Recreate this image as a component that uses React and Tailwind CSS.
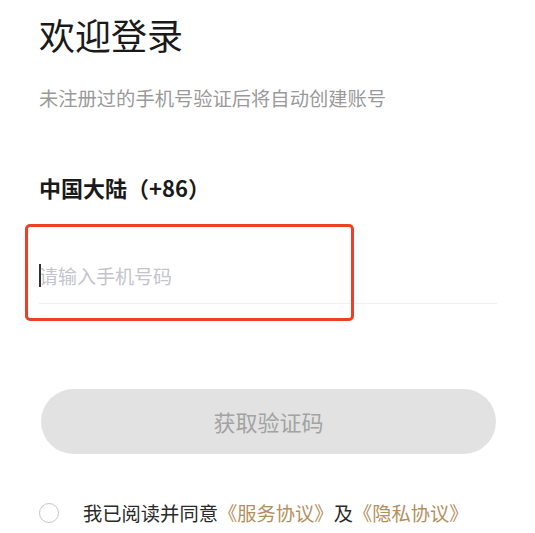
import React, { useState } from "react";

const font = "font-['Noto_Sans_CJK_SC','Noto_Sans',sans-serif]";

// Login page with phone number entry
const App = () => {
  const [agreed, setAgreed] = useState(false);
  const [phone, setPhone] = useState("");

  return (
    <div className={`min-h-screen bg-white ${font} pl-[39px] pr-[38px] relative`}>
      <h1 className="pt-[9px] text-[36px] leading-[50px] text-[#1a1a1a] font-normal">欢迎登录</h1>
      <p className="mt-[26px] text-[19.3px] leading-[26px] text-[#9a9a9a]">未注册过的手机号验证后将自动创建账号</p>

      <div className="mt-[62px] text-[22px] leading-[28px] font-bold text-[#1a1a1a]">中国大陆（+86）</div>

      {/* Phone input */}
      <div className="relative mt-[63px] border-b border-[#f0f0f0] pb-[14px]">
        <input
          type="tel"
          value={phone}
          onChange={(e) => setPhone(e.target.value)}
          placeholder="请输入手机号码"
          className="w-full text-[19px] leading-[24px] text-[#1a1a1a] placeholder:text-[#c4c4cc] outline-none bg-transparent caret-[#333]"
        />
        <span className="absolute left-0 top-[0px] w-[1.5px] h-[23px] bg-[#333]" />
      </div>

      {/* Annotation box over the input */}
      <div className="absolute left-[25px] top-[224px] w-[329px] h-[97px] border-[3px] border-[#ee4028] rounded-[5px] pointer-events-none" />

      <button
        type="button"
        disabled
        className="mt-[85px] ml-[2px] w-[455px] h-[65px] rounded-full bg-[#e2e2e2] text-[22px] text-[#a3a3a3] flex items-center justify-center"
      >
        获取验证码
      </button>

      <label className="mt-[46px] flex items-center text-[19.3px] leading-[26px] cursor-pointer">
        <button
          type="button"
          onClick={() => setAgreed(!agreed)}
          className={`w-[20px] h-[20px] rounded-full border-[1.5px] ${agreed ? "border-[#b08f5f] bg-[#b08f5f]" : "border-[#c8c8c8]"} shrink-0`}
        />
        <span className="ml-[24px] text-[#2a2a2a]">
          我已阅读并同意<span className="text-[#b48f5e]">《服务协议》</span>及<span className="text-[#b48f5e]">《隐私协议》</span>
        </span>
      </label>
    </div>
  );
};

export default App;
